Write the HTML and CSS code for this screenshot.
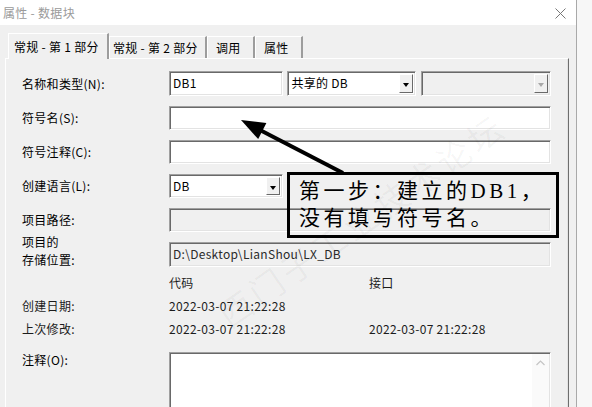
FILE: index.html
```html
<!DOCTYPE html>
<html>
<head>
	<meta charset="UTF-8">
	<title>属性 - 数据块</title>
<link rel="stylesheet" href="styles.css">
</head>
<body>

<div class="window">
	<div class="titlebar">
		<span class="title">属性 - 数据块</span>
		<svg class="close" width="11" height="11" viewBox="0 0 11 11">
			<path d="M0.5 0.5 L10.5 10.5 M10.5 0.5 L0.5 10.5" stroke="#777" stroke-width="1" fill="none"/>
		</svg>
	</div>

	<div class="tabs">
		<div class="tab active">常规 - 第 1 部分</div>
		<div class="tab">常规 - 第 2 部分</div>
		<div class="tab small">调用</div>
		<div class="tab small">属性</div>
	</div>

	<div class="panel">
		<div class="form">
			<div class="label">名称和类型(N):</div>
			<div class="fields">
				<div class="box name">DB1</div>
				<div class="box combo type">共享的 DB<span class="drop"></span></div>
				<div class="box combo off fb"><span class="drop grey"></span></div>
			</div>

			<div class="label">符号名(S):</div>
			<div class="box"></div>

			<div class="label">符号注释(C):</div>
			<div class="box"></div>

			<div class="label">创建语言(L):</div>
			<div class="fields">
				<div class="box combo lang">DB<span class="drop"></span></div>
			</div>

			<div class="label">项目路径:</div>
			<div class="box off"></div>

			<div class="label two">项目的<br>存储位置:</div>
			<div class="box off">D:\Desktop\LianShou\LX_DB</div>
		</div>

		<div class="info">
			<div></div><div>代码</div><div>接口</div>
			<div class="label">创建日期:</div><div>2022-03-07 21:22:28</div><div></div>
			<div class="label">上次修改:</div><div>2022-03-07 21:22:28</div><div>2022-03-07 21:22:28</div>
		</div>

		<div class="notes">
			<div class="label">注释(O):</div>
			<div class="box memo">
				<div class="scroll">
					<svg width="9" height="6" viewBox="0 0 9 6"><path d="M0.5 5 L4.5 1 L8.5 5" stroke="#c4c4c4" stroke-width="1.2" fill="none"/></svg>
				</div>
			</div>
		</div>
	</div>
</div>

<div class="mark">西门子工业技术论坛</div>

<div class="callout">第一步：建立的DB1，<br>没有填写符号名。</div>

<svg class="arrow" width="592" height="407" viewBox="0 0 592 407">
	<line x1="343" y1="173" x2="258" y2="129" stroke="#000" stroke-width="4"/>
	<polygon points="241,120 266.4,123.1 258.2,139.1" fill="#000"/>
</svg>

</body>
</html>
```

FILE: styles.css
```css
body {
	margin: 0;
	background-color: #f7f7f7;
	font-family: "Noto Sans CJK SC", "Microsoft YaHei", sans-serif;
	font-size: 12px;
	letter-spacing: 0.3px;
	color: #000;
	overflow: hidden;
}
.window {
	width: 576px;
	height: 407px;
	background-color: #f0f0f0;
	border-right: 1px solid #a9a9a9;
	overflow: hidden;
}
.titlebar {
	height: 25px;
	background-color: #fff;
	display: flex;
	align-items: center;
	justify-content: space-between;
	padding: 0 10px 0 3px;
}
.title {
	color: #9a9a9a;
	font-size: 12px;
}
.close {
	margin-top: 2px;
}

/* tab strip */
.tabs {
	display: flex;
	align-items: flex-end;
	height: 25px;
	margin-top: 8px;
	padding-left: 8px;
	position: relative;
	z-index: 1;
}
.tab {
	height: 22px;
	line-height: 22px;
	box-sizing: border-box;
	border-top: 1px solid #fff;
	border-left: 1px solid #fff;
	border-right: 2px solid #9d9d9d;
	width: 98px;
	padding-left: 3px;
	white-space: nowrap;
}
.tab.active {
	height: 26px;
	margin-bottom: -1px;
	width: 101px;
	line-height: 25px;
	padding-left: 5px;
	background-color: #f0f0f0;
}
.tab.small {
	width: 48px;
	padding-left: 8px;
}

/* panel */
.panel {
	margin-left: 5px;
	width: 564px;
	box-sizing: border-box;
	border-top: 1px solid #fff;
	border-left: 1px solid #fff;
	border-right: 1px solid #6e6e6e;
	box-shadow: inset -1px 0 0 #e3e3e3;
	padding: 12px 0 0 16px;
	height: 360px;
}
.form {
	display: grid;
	grid-template-columns: 147px 382px;
	grid-template-rows: 25px 24px 24px 24px 24px 25px;
	row-gap: 10px;
	align-items: center;
}
.fields {
	display: flex;
	height: 100%;
}
.label {
	white-space: nowrap;
	line-height: 18px;
}
.label.two {
	align-self: start;
	margin-top: -9px;
}

/* sunken edit boxes */
.box {
	height: 100%;
	box-sizing: border-box;
	background-color: #fff;
	border: 1px solid;
	border-color: #a0a0a0 #fff #fff #a0a0a0;
	box-shadow: inset 1px 1px 0 #696969, inset -1px -1px 0 #e3e3e3;
	padding: 2px 3px 0 3px;
	line-height: 18px;
	position: relative;
}
.box.off {
	background-color: #f0f0f0;
	color: #2a2a2a;
}
.name {
	width: 115px;
}
.type {
	width: 129px;
	margin-left: 4px;
}
.fb {
	width: 131px;
	margin-left: 5px;
}
.lang {
	width: 114px;
}
.drop {
	position: absolute;
	right: 2px;
	top: 2px;
	bottom: 2px;
	width: 14px;
	background-color: #f0f0f0;
	border-top: 1px solid #fff;
	border-left: 1px solid #fff;
	border-right: 1px solid #696969;
	border-bottom: 1px solid #696969;
	box-sizing: border-box;
}
.drop::after {
	content: "";
	position: absolute;
	left: 3px;
	top: 8px;
	border-left: 3.5px solid transparent;
	border-right: 3.5px solid transparent;
	border-top: 4px solid #000;
}
.drop.grey::after {
	border-top-color: #a8a8a8;
}

/* creation info */
.info {
	display: grid;
	grid-template-columns: 147px 200px auto;
	row-gap: 5px;
	line-height: 18px;
	margin-top: 7px;
}
.info div {
	color: #1c1c1c;
}

.notes {
	display: grid;
	grid-template-columns: 147px 382px;
	margin-top: 14px;
	align-items: start;
}
.notes .label {
	margin-top: -1px;
}
.memo {
	height: 80px;
}
.scroll {
	position: absolute;
	right: 1px;
	top: 1px;
	bottom: 0;
	width: 17px;
	background-color: #fafafa;
	text-align: center;
	padding-top: 6px;
	box-sizing: border-box;
	line-height: 0;
}

/* overlays from the screenshot annotation */
.callout {
	position: absolute;
	left: 287px;
	top: 172px;
	width: 272px;
	height: 66px;
	box-sizing: border-box;
	border: 3px solid #000;
	font-family: "Liberation Serif", "Noto Sans CJK SC", serif;
	font-size: 21px;
	letter-spacing: 3.5px;
	line-height: 27px;
	padding: 3px 0 0 9px;
	color: #000;
	white-space: nowrap;
}
.arrow {
	position: absolute;
	left: 0;
	top: 0;
	pointer-events: none;
}
.mark {
	position: absolute;
	left: 190px;
	top: 195px;
	font-size: 34px;
	color: rgba(0, 0, 0, 0.04);
	transform: rotate(-35deg);
	letter-spacing: 4px;
	white-space: nowrap;
}
```
